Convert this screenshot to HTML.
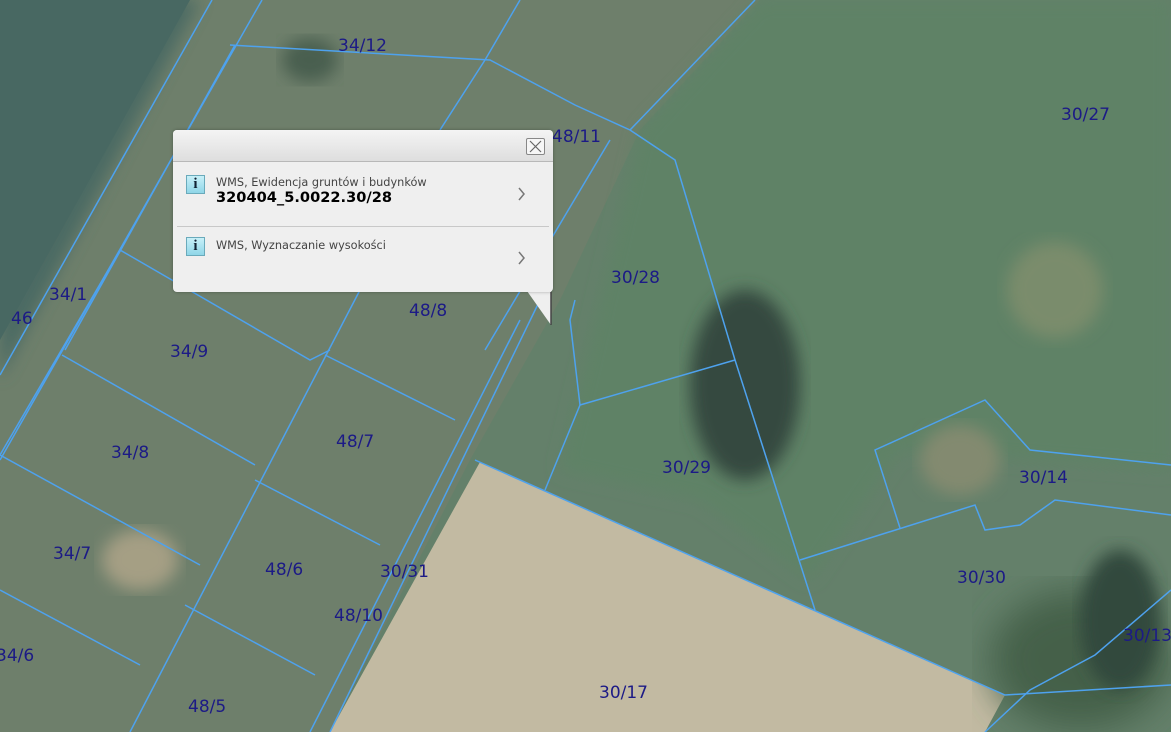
<!DOCTYPE html>
<html><head><meta charset="utf-8"><style>
html,body{margin:0;padding:0;width:1171px;height:732px;overflow:hidden;font-family:"Liberation Sans",sans-serif}
.map{position:absolute;left:0;top:0}
.lbl{position:absolute;color:#1c1a86;font-size:17px;font-family:"DejaVu Sans","Liberation Sans",sans-serif}
.pop{position:absolute;left:173px;top:130px;width:380px;height:162px;background:#efefef;border-radius:4px;box-shadow:0 0 3px rgba(0,0,0,.3)}
.hdr{height:31px;background:linear-gradient(#f4f4f4,#dedede);border-bottom:1px solid #b8b8b8;border-radius:4px 4px 0 0}
.x{position:absolute;left:353px;top:8px;width:17px;height:15px;border:1px solid #888;border-radius:2px;background:#f6f6f6}
.ico{position:absolute;width:17px;height:17px;background:linear-gradient(#c8f0f8,#8fd6e8);border:1px solid #6aaabb;font:bold 15px "Liberation Serif",serif;color:#123;text-align:center;line-height:17px}
.t{position:absolute;font-size:11.3px;color:#444;font-family:"DejaVu Sans",sans-serif}
.b{position:absolute;font-size:14.6px;font-weight:bold;color:#000;font-family:"DejaVu Sans",sans-serif}
.ar{position:absolute}
.sep{position:absolute;left:4px;right:4px;top:96px;border-top:1px solid #c8c8c8}
</style></head><body>
<svg class="map" width="1171" height="732" viewBox="0 0 1171 732">
<defs>
<filter id="bl"><feGaussianBlur stdDeviation="18"/></filter>
<filter id="bl2"><feGaussianBlur stdDeviation="8"/></filter>
</defs>
<rect width="1171" height="732" fill="#64806a"/>
<polygon points="0,0 760,0 640,130 560,300 470,460 330,732 0,732" fill="#6e7f6b"/>
<polygon points="640,130 760,0 1171,0 1171,470 900,450 810,580 700,500 560,470" fill="#5f8266" filter="url(#bl2)"/>
<polygon points="0,0 200,0 0,380" fill="#4c6b64" filter="url(#bl2)"/>
<polygon points="0,0 190,0 0,340" fill="#486862"/>
<polygon points="480,462 1005,695 985,732 330,732" fill="#c2baa2"/>
<ellipse cx="1055" cy="290" rx="48" ry="48" fill="#7a8c6c" filter="url(#bl2)"/>
<ellipse cx="140" cy="560" rx="38" ry="30" fill="#a59f84" filter="url(#bl2)"/>
<ellipse cx="745" cy="385" rx="55" ry="95" fill="#34483f" filter="url(#bl2)"/>
<ellipse cx="1080" cy="660" rx="90" ry="70" fill="#44604a" filter="url(#bl)"/>
<ellipse cx="1120" cy="620" rx="40" ry="70" fill="#33493e" filter="url(#bl2)"/>
<ellipse cx="310" cy="60" rx="28" ry="22" fill="#4a5e50" filter="url(#bl2)"/>
<ellipse cx="960" cy="460" rx="40" ry="35" fill="#838a70" filter="url(#bl2)"/>
<g stroke="#4ea2ee" stroke-width="1.5" fill="none">
<line x1="212" y1="0" x2="0" y2="375"/>
<line x1="262" y1="0" x2="0" y2="460"/>
<line x1="235" y1="45" x2="65" y2="350"/>
<polyline points="230,45 490,60 575,105 630,130"/>
<polyline points="520,0 485,60 440,130"/>
<line x1="630" y1="130" x2="755" y2="0"/>
<polyline points="630,130 675,160 735,360 815,610"/>
<polyline points="575,300 570,320 580,405 735,360"/>
<line x1="580" y1="405" x2="545" y2="490"/>
<line x1="610" y1="140" x2="485" y2="350"/>
<line x1="540" y1="300" x2="330" y2="732"/>
<line x1="520" y1="320" x2="310" y2="732"/>
<line x1="360" y1="290" x2="130" y2="732"/>
<line x1="120" y1="250" x2="0" y2="455"/>
<polyline points="120,250 310,360 330,350"/>
<polyline points="62,355 255,465"/>
<polyline points="325,355 455,420"/>
<polyline points="0,455 200,565"/>
<polyline points="255,480 380,545"/>
<polyline points="0,590 140,665"/>
<polyline points="185,605 315,675"/>
<polyline points="475,460 1005,695 1171,685"/>
<polyline points="800,560 975,505 985,530 1020,525 1055,500 1171,515"/>
<polyline points="900,528 875,450 985,400 1030,450 1171,465"/>
<polyline points="1171,590 1095,655 1030,690 985,732"/>
</g>
</svg>
<div class="lbl" style="left:338px;top:36px">34/12</div>
<div class="lbl" style="left:552px;top:127px">48/11</div>
<div class="lbl" style="left:1061px;top:105px">30/27</div>
<div class="lbl" style="left:611px;top:268px">30/28</div>
<div class="lbl" style="left:49px;top:285px">34/1</div>
<div class="lbl" style="left:11px;top:309px">46</div>
<div class="lbl" style="left:409px;top:301px">48/8</div>
<div class="lbl" style="left:170px;top:342px">34/9</div>
<div class="lbl" style="left:336px;top:432px">48/7</div>
<div class="lbl" style="left:111px;top:443px">34/8</div>
<div class="lbl" style="left:662px;top:458px">30/29</div>
<div class="lbl" style="left:1019px;top:468px">30/14</div>
<div class="lbl" style="left:53px;top:544px">34/7</div>
<div class="lbl" style="left:265px;top:560px">48/6</div>
<div class="lbl" style="left:380px;top:562px">30/31</div>
<div class="lbl" style="left:957px;top:568px">30/30</div>
<div class="lbl" style="left:334px;top:606px">48/10</div>
<div class="lbl" style="left:1123px;top:626px">30/13</div>
<div class="lbl" style="left:-4px;top:646px">34/6</div>
<div class="lbl" style="left:599px;top:683px">30/17</div>
<div class="lbl" style="left:188px;top:697px">48/5</div>
<svg style="position:absolute;left:0;top:0" width="1171" height="732"><polygon points="527,291 551,291 551,325" fill="#efefef"/><line x1="551" y1="292" x2="551" y2="325" stroke="#444" stroke-width="1.5"/></svg>
<div class="pop">
<div class="hdr"></div>
<div class="x"><svg width="17" height="15"><path d="M3 2 L14 13 M14 2 L3 13" stroke="#666" stroke-width="1.2"/></svg></div>
<div class="ico" style="left:13px;top:45px">i</div>
<div class="t" style="left:43px;top:46px">WMS, Ewidencja gruntów i budynków</div>
<div class="b" style="left:43px;top:59px">320404_5.0022.30/28</div>
<div class="ar" style="left:345px;top:57px"><svg width="8" height="14"><path d="M1 1 L6 7 L1 13" stroke="#777" stroke-width="1.5" fill="none"/></svg></div>
<div class="sep"></div>
<div class="ico" style="left:13px;top:107px">i</div>
<div class="t" style="left:43px;top:109px">WMS, Wyznaczanie wysokości</div>
<div class="ar" style="left:345px;top:121px"><svg width="8" height="14"><path d="M1 1 L6 7 L1 13" stroke="#777" stroke-width="1.5" fill="none"/></svg></div>
</div>
</body></html>
